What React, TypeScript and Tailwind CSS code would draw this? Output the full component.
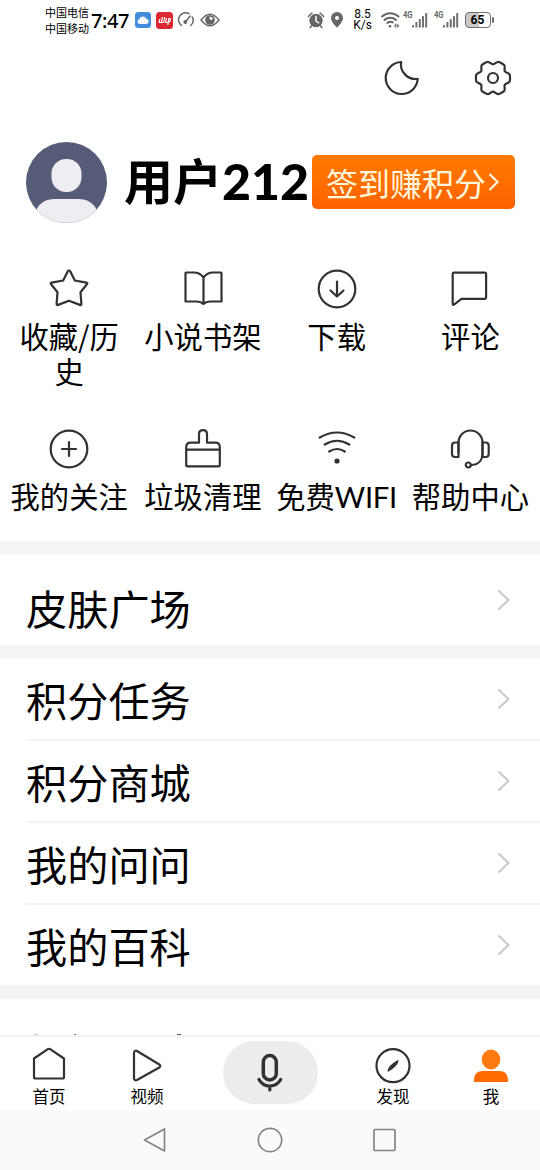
import type { ReactNode } from "react";

const FONT = "font-['Noto_Sans_CJK_SC',sans-serif]";

/** Closed outline of the six-lobed settings gear, centred on 0,0. */
function gearPath(): string {
  const pts: [number, number][] = [];
  for (let k = 0; k < 6; k++) {
    const polar: [number, number][] = [[-12, 17], [12, 17], [30, 13.6]];
    for (const [d, r] of polar) {
      const a = ((k * 60 + d) * Math.PI) / 180;
      pts.push([r * Math.cos(a), r * Math.sin(a)]);
    }
  }
  const n = pts.length;
  let d = `M${pts[0][0].toFixed(2)} ${pts[0][1].toFixed(2)}`;
  for (let i = 0; i < n; i++) {
    const a = pts[(i + n - 1) % n];
    const b = pts[i];
    const c = pts[(i + 1) % n];
    const e = pts[(i + 2) % n];
    const t = 8;
    d += `C${(b[0] + (c[0] - a[0]) / t).toFixed(2)} ${(b[1] + (c[1] - a[1]) / t).toFixed(2)} ${(c[0] - (e[0] - b[0]) / t).toFixed(2)} ${(c[1] - (e[1] - b[1]) / t).toFixed(2)} ${c[0].toFixed(2)} ${c[1].toFixed(2)}`;
  }
  return d + "Z";
}

function Line({ children, className = "size-10" }: { children: ReactNode; className?: string }) {
  return (
    <svg viewBox="-20 -20 40 40" className={`${className} shrink-0`} fill="none" stroke="#303234" strokeWidth="2.2" strokeLinecap="round" strokeLinejoin="round">
      {children}
    </svg>
  );
}

function Signal() {
  return (
    <div className="flex h-[18px] w-[25px] shrink-0 items-start">
      <span className="w-[8px] origin-left scale-x-85 font-['Roboto',sans-serif] text-[9px] font-bold leading-[9px] tracking-[-0.3px] text-[#666]">4G</span>
      <svg viewBox="0 0 17 18" className="h-[18px] w-[17px]" fill="#707070">
        <rect x="1" y="14" width="2" height="2.5" rx=".6" />
        <rect x="4.400" y="11" width="2" height="5.500" rx=".6" />
        <rect x="7.800" y="8" width="2" height="8.500" rx=".6" />
        <rect x="11" y="5" width="2" height="11.500" rx=".6" />
        <rect x="14.200" y="2" width="2" height="14.500" rx=".6" />
      </svg>
    </div>
  );
}

function StatusBar() {
  return (
    <div className="flex h-10 shrink-0 items-center pl-[45px] text-black">
      <div className="w-[46px] shrink-0 whitespace-nowrap text-[11px] leading-[16px]">
        <div>中国电信</div>
        <div>中国移动</div>
      </div>
      <span className="w-[44px] shrink-0 pt-[2px] font-['Noto_Sans',sans-serif] text-[20px] font-medium leading-6 tracking-[-0.4px]">7:47</span>
      <svg viewBox="0 0 16 16" className="h-4 w-4 shrink-0">
        <rect width="16" height="16" rx="3.5" fill="#438cdc" />
        <path d="M4.5 12a2.4 2.4 0 0 1-.2-4.7 3.7 3.7 0 0 1 7-.6A2.7 2.7 0 0 1 11.6 12Z" fill="#f5f9ff" />
      </svg>
      <svg viewBox="0 0 17 17" className="ml-[4.500px] h-[17px] w-[17px] shrink-0">
        <rect width="17" height="17" rx="3.5" fill="#dc2632" />
        <path d="M3 11l.8-4M5.300 11l1-6M7.500 11l1.200-6M9.700 11l.7-5M11.800 12.800l1.200-6.800M14 9.500l.5-3M3 10.500h4M9 10.500h2.500M12.500 6.500h2M12.500 9.800h1.500" stroke="#fff" strokeWidth="1.200" fill="none" />
      </svg>
      <svg viewBox="0 0 18 18" className="ml-[4px] h-[18px] w-[18px] shrink-0" fill="none" stroke="#666" strokeWidth="1.500" strokeLinecap="round">
        <path d="M4.500 14.500A7 7 0 0 1 12 2.700M15.300 6a7 7 0 0 1-1.500 8.500M8.700 10.500l4.500-5.500" />
        <circle cx="8.300" cy="11" r="1.200" fill="#666" />
      </svg>
      <svg viewBox="0 0 20 14" className="ml-[5px] h-[14px] w-[20px] shrink-0">
        <path d="M1 7Q5.500 1.200 10 1.200T19 7Q14.500 12.800 10 12.800T1 7Z" fill="none" stroke="#666" strokeWidth="1.400" />
        <circle cx="10" cy="7" r="4.800" fill="#666" />
        <path d="M9.500 3.800a2.500 2.500 0 0 0 2.600 3.300 2.400 2.400 0 0 0 .7-1.500A3 3 0 0 0 9.500 3.800Z" fill="#fff" />
      </svg>
      <svg viewBox="0 0 18 18" className="ml-[87.500px] h-[18px] w-[18px] shrink-0">
        <circle cx="9" cy="9.500" r="6.700" fill="#666" />
        <path d="M1.300 5.500 5 2M16.700 5.500 13 2M4.500 15 3 16.700M13.500 15l1.500 1.700" stroke="#666" strokeWidth="1.500" strokeLinecap="round" />
        <path d="M9 5.500V10l2.700 1.800" stroke="#fff" strokeWidth="1.500" fill="none" strokeLinecap="round" />
      </svg>
      <svg viewBox="0 0 12 16" className="ml-[6px] h-4 w-3 shrink-0">
        <path fillRule="evenodd" d="M6 0a6 6 0 0 1 6 6c0 3.600-3.400 6.600-6 9.800C3.400 12.600 0 9.600 0 6a6 6 0 0 1 6-6Zm0 4a2 2 0 1 0 0 4 2 2 0 0 0 0-4Z" fill="#666" />
      </svg>
      <div className="ml-[9.500px] w-[20px] shrink-0 text-center font-['Roboto',sans-serif] text-[12px] leading-[11.500px]">
        <div>8.5</div>
        <div>K/s</div>
      </div>
      <svg viewBox="0 0 19 18" className="ml-[8px] h-[18px] w-[19px] shrink-0" fill="none" stroke="#666" strokeWidth="1.900" strokeLinecap="round">
        <path d="M1 5.500a12 12 0 0 1 16.500 0M3.500 9a8.500 8.500 0 0 1 11.500 0M6.300 12a5 5 0 0 1 5.500-.6" />
        <circle cx="9" cy="15.200" r="1.300" fill="#666" stroke="none" />
        <path d="m14.800 13-1.500 1.700 1.500 1.700ZM16.500 13l1.500 1.700-1.500 1.700Z" fill="#666" strokeWidth=".5" />
      </svg>
      <div className="ml-[3.500px] flex gap-[5.500px]">
        <Signal />
        <Signal />
      </div>
      <div className="ml-[6px] flex h-4 w-[26px] shrink-0 items-center justify-center rounded-[4px] border-[1.500px] border-[#707070] bg-linear-to-r from-[#c8c8c8] from-55% to-white to-55% font-['Roboto',sans-serif] text-[12px] font-bold leading-none">65</div>
      <span className="ml-px h-[6px] w-[2px] rounded bg-[#707070]" />
    </div>
  );
}

const icons: Record<string, ReactNode> = {
  star: <path d="M0-18.500q.8 0 1.200.8l4.600 9.200 11.500 2.100q1.700.4.600 1.700L11.500 3.300l.9 11.500q.1 1.700-1.500 1.100L0 11.700l-10.900 4.200q-1.600.6-1.500-1.100l.9-11.500-6.400-8q-1.100-1.300.6-1.700l11.500-2.100 4.600-9.200q.4-.8 1.200-.8Z" />,
  book: <path d="M.5-11.500C-2.500-15.500-5-16.500-9-16.500h-8q-.5 0-.5.500V12.500H-7C-3.500 12.500-1.500 13 .5 15c2-2 4-2.500 7-2.500h11V-16q0-.5-.5-.5h-8c-4 0-6.500 1-9.500 5ZM.5-11.500V15" />,
  download: (
    <>
      <circle r="18.300" />
      <path d="M0-7.500V7M-6.500 1.500 0 7.500l6.500-6" />
    </>
  ),
  comment: <path d="M-17.300-15v30.300q.3 1 1.300.3l7.500-5.800H14.800q1.300 0 1.300-1.300V-15q0-1.300-1.300-1.300H-16q-1.300 0-1.300 1.300Z" />,
  plus: (
    <>
      <circle r="18.300" />
      <path d="M-7 0H7M0-7V7" />
    </>
  ),
  brush: <path d="M-16.800-.5h33.600M-16.800-3v18q0 1.200 1.200 1.200h31.200q1.200 0 1.200-1.200V-3q0-4.500-4.500-4.500H4v-8.500q0-4-4-4t-4 4v8.500h-8.300q-4.500 0-4.500 4.500Z" transform="translate(0 1.200)" />,
  wifi: (
    <>
      <path d="M-17.300-11.500Q0-21.500 17.300-11.500M-12.300-4.500Q0-12 12.300-4.500M-7.800 2.500Q0-2.500 7.800 2.500" />
      <circle cy="12" r="2.600" fill="#303234" stroke="none" />
    </>
  ),
  support: (
    <>
      <path d="M-11.500 4V-6.500a12 12 0 0 1 24 0V4C12.500 11.500 8 16 1 16" />
      <path d="M-11.500-6.500h-3.300q-3.200 0-3.200 3.200V5q0 3 3 3h3.500ZM12.500-6.500h3q3.200 0 3.200 3.200V5q0 3-3 3h-3.200Z" />
      <circle cx="-1.700" cy="16" r="2.500" />
    </>
  ),
};

function Shortcut({ icon, label }: { icon: string; label: ReactNode }) {
  return (
    <div className="flex flex-col items-center">
      <Line>{icons[icon]}</Line>
      <div className="mt-[9px] whitespace-nowrap text-center text-[29.300px] leading-[34.500px]">{label}</div>
    </div>
  );
}

function Row({ label, divider = true }: { label: string; divider?: boolean }) {
  return (
    <div className={`flex shrink-0 pl-[26px] ${divider ? "h-[82px]" : "h-[80px]"}`}>
      <div className={`flex flex-1 items-center justify-between pr-[30px] ${divider ? "border-b-2 border-[#f4f4f4]" : ""}`}>
        <span className="text-[41.200px] leading-[60px]">{label}</span>
        <Chevron />
      </div>
    </div>
  );
}

function Chevron() {
  return (
    <svg viewBox="0 0 13 22" className="h-[22px] w-[13px]" fill="none" stroke="#c9c9c9" strokeWidth="2" strokeLinecap="round" strokeLinejoin="round">
      <path d="m2 2 9.500 9L2 20" />
    </svg>
  );
}

function Tab({ label, children }: { label: string; children: ReactNode }) {
  return (
    <div className="flex w-[98px] flex-col items-center pt-[9px]">
      {children}
      <span className="-mt-[1px] text-[16.500px] leading-[22px]">{label}</span>
    </div>
  );
}

export default function App() {
  return (
    <div className={`flex h-[1170px] w-[540px] flex-col overflow-hidden bg-white text-black ${FONT}`}>
      <StatusBar />

      <div className="flex h-[75px] shrink-0 items-center justify-end gap-[51px] pr-[27.500px]">
        <Line>
          <path d="M-.8-16A16 16 0 1 0 15.700.8A14.500 14.500 0 0 1-.8-16Z" />
        </Line>
        <Line>
          <path d={gearPath()} />
          <circle r="5" />
        </Line>
      </div>

      <div className="flex h-[134px] shrink-0 items-center pl-[25.500px]">
        <svg viewBox="0 0 81 81" className="size-[81px] shrink-0">
          <clipPath id="face">
            <circle cx="40.500" cy="40.500" r="40.500" />
          </clipPath>
          <g clipPath="url(#face)">
            <rect width="81" height="81" fill="#565c78" />
            <rect x="25.500" y="17" width="30" height="33" rx="14.500" fill="#eeedf1" />
            <path d="M6 81Q10 57 28 57H53Q71 57 75 81Z" fill="#eeedf1" />
          </g>
        </svg>
        <div className="ml-[17.500px] flex w-[188px] shrink-0 items-baseline whitespace-nowrap pb-[4px] text-[49px] font-bold leading-[60px]">
          用户<span className="font-['Lato',sans-serif] text-[50px] font-black">212</span>
        </div>
        <div className="flex h-[54px] w-[203px] shrink-0 items-center rounded-[5px] bg-linear-to-b from-[#ff7a00] to-[#ff6200] pl-[14px] text-[#fff6dc]">
          <span className="whitespace-nowrap text-[32px] leading-[48px]">签到赚积分</span>
          <svg viewBox="0 0 12 20" className="ml-[2px] h-5 w-3" fill="none" stroke="#fff6dc" strokeWidth="2.200">
            <path d="m1.500 2 8 8-8 8" />
          </svg>
        </div>
      </div>

      <div className="grid h-[292px] shrink-0 grid-cols-[repeat(4,133.75px)] grid-rows-[160px_132px] px-[2.250px] pt-5">
        <Shortcut icon="star" label={<>收藏/历<br />史</>} />
        <Shortcut icon="book" label="小说书架" />
        <Shortcut icon="download" label="下载" />
        <Shortcut icon="comment" label="评论" />
        <Shortcut icon="plus" label="我的关注" />
        <Shortcut icon="brush" label="垃圾清理" />
        <Shortcut icon="wifi" label={<>免费<span className="font-['Lato',sans-serif] tracking-[-0.3px]">WIFI</span></>} />
        <Shortcut icon="support" label="帮助中心" />
      </div>

      <div className="h-[13px] shrink-0 bg-[#f4f4f4]" />
      <div className="flex h-[91px] shrink-0 items-center justify-between pl-[26px] pr-[30px]">
        <span className="pt-[15px] text-[41.200px] leading-[60px]">皮肤广场</span>
        <Chevron />
      </div>
      <div className="h-[13px] shrink-0 bg-[#f4f4f4]" />
      <div className="flex h-[327px] shrink-0 flex-col overflow-hidden pt-px">
        <Row label="积分任务" />
        <Row label="积分商城" />
        <Row label="我的问问" />
        <Row label="我的百科" divider={false} />
      </div>
      <div className="h-[14px] shrink-0 bg-[#f4f4f4]" />
      <div className="flex h-[36px] shrink-0 items-end">
        <span className="ml-[34px] h-px w-[4px] bg-[#ccc]" />
        <span className="ml-[35.500px] h-px w-[2px] bg-[#777]" />
        <span className="ml-[101px] h-px w-[4px] bg-[#555]" />
      </div>

      <div className="flex h-[75px] shrink-0 border-t-2 border-[#f2f2f2]">
        <Tab label="首页">
          <Line className="size-10">
            <path d="M-15-7.500V11q0 1.500 1.500 1.500h27Q15 12.500 15 11V-7.500L1.200-16.800q-1.200-.8-2.400 0Z" strokeWidth="2.200" />
          </Line>
        </Tab>
        <Tab label="视频">
          <Line className="size-10">
            <path d="M-13-13.500v26q.5 2.500 3 1.500L12.300 1.500q2-1.500 0-3L-10-15q-2.500-1-3 1.500Z" strokeWidth="2.200" />
          </Line>
        </Tab>
        <div className="flex w-[148px] justify-center pt-1">
          <div className="flex h-[63px] w-[95px] items-center justify-center rounded-full bg-[#ececec]">
            <svg viewBox="0 0 30 40" className="h-10 w-[30px]" fill="none" stroke="#303234" strokeWidth="3.500" strokeLinecap="round">
              <rect x="8.300" y="2.500" width="13" height="24.500" rx="6.500" />
              <path d="M4 26.500q3.500 6.500 10.800 6.500T25.700 26.500M14.800 33.500v3.500" strokeWidth="3.200" />
            </svg>
          </div>
        </div>
        <Tab label="发现">
          <Line className="size-10">
            <circle cy="-.3" r="16.500" strokeWidth="2.200" />
            <path d="M-4.800 4.800Q-4 0 4.800-5.200Q4-.5-4.800 4.800Z" fill="#303234" strokeWidth="1.500" />
          </Line>
        </Tab>
        <Tab label="我">
          <svg viewBox="-20 -20 40 40" className="size-10">
            <ellipse cy="-6.500" rx="9.300" ry="10" fill="#ff7b12" />
            <path d="M-17 16V14Q-17 5-8 5H8Q17 5 17 14v2Z" fill="#ff6a00" />
          </svg>
        </Tab>
      </div>

      <div className="flex h-[60px] shrink-0 items-center justify-center gap-[89px] bg-[#fafafa]">
        <svg viewBox="0 0 26 26" className="size-[26px]" fill="none" stroke="#858585" strokeWidth="1.700" strokeLinejoin="round">
          <path d="M22.500 2v22L2.500 13Z" />
        </svg>
        <svg viewBox="0 0 26 26" className="size-[26px]" fill="none" stroke="#858585" strokeWidth="1.700">
          <circle cx="13" cy="13" r="11.700" />
        </svg>
        <svg viewBox="0 0 26 26" className="size-[26px]" fill="none" stroke="#858585" strokeWidth="1.700">
          <rect x="2" y="2.500" width="21" height="21" rx="1" />
        </svg>
      </div>
    </div>
  );
}
